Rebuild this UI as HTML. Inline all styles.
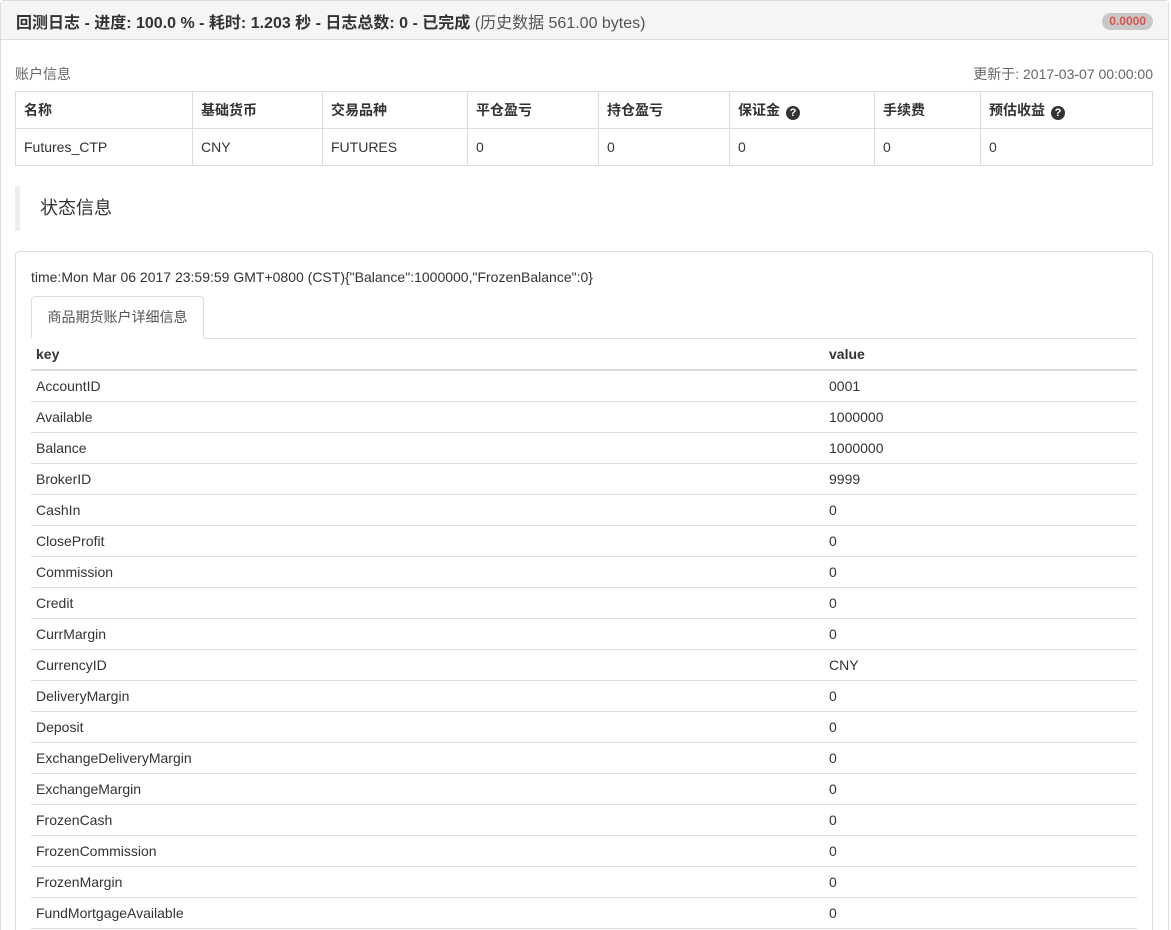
<!DOCTYPE html>
<html><head><meta charset="utf-8"><style>
*{box-sizing:border-box;margin:0;padding:0}
html,body{width:1171px;height:930px;overflow:hidden}
body{background:#fff;font-family:"Liberation Sans","Noto Sans CJK SC",sans-serif;font-size:14px;color:#333;position:relative}
.panel{position:absolute;left:0;top:0;width:1169px;height:960px;border:1px solid #ddd;border-radius:4px}
.ph{height:39px;background:#f5f5f5;border-bottom:1px solid #ddd;position:relative}
.ph .t{position:absolute;left:15px;top:8px;font-size:16px;font-weight:bold;color:#333}
.ph .t span{font-weight:normal;color:#555}
.badge{position:absolute;right:15px;top:12px;background:#c8c8c8;color:#d9534f;font-size:12px;font-weight:bold;border-radius:10px;padding:2px 7px;line-height:13px}
.abs{position:absolute}
table{border-collapse:collapse}
.acc{position:absolute;left:15px;top:91px;width:1138px}
.acc td,.acc th{border:1px solid #ddd;height:37px;padding:0 8px;text-align:left;vertical-align:middle}
.acc th{font-weight:bold}
.q{display:inline-block;width:14px;height:14px;border-radius:50%;background:#333;color:#fff;font-size:11px;line-height:14px;text-align:center;font-weight:bold;margin-left:6px;vertical-align:-1px}
.bq{position:absolute;left:15px;top:186px;height:45px;border-left:5px solid #eee;padding-left:20px;font-size:18px;line-height:45px}
.inner{position:absolute;left:15px;top:251px;width:1138px;height:720px;border:1px solid #ddd;border-radius:4px}
.tab{position:absolute;left:31px;top:296px;width:173px;height:43px;border:1px solid #ddd;border-bottom:1px solid #fff;border-radius:4px 4px 0 0;background:#fff;line-height:41px;text-align:center;color:#555}
.tline{position:absolute;left:31px;top:338px;width:1106px;border-top:1px solid #ddd}
.kv{position:absolute;left:31px;top:339px;width:1106px}
.kv td,.kv th{height:31px;padding:0 5px;text-align:left;border-bottom:1px solid #ddd;vertical-align:middle}
.kv th{border-bottom:2px solid #ddd;height:31px;font-weight:bold}
.kv td:first-child,.kv th:first-child{width:793px}
</style></head><body>
<div class="panel">
<div class="ph"><div class="t">回测日志 - 进度: 100.0 % - 耗时: 1.203 秒 - 日志总数: 0 - 已完成 <span>(历史数据 561.00 bytes)</span></div><div class="badge">0.0000</div></div>
</div>
<div class="abs" style="left:15px;top:64px;color:#666">账户信息</div>
<div class="abs" style="right:18px;top:64px;color:#666">更新于: 2017-03-07 00:00:00</div>
<table class="acc"><tr><th style="width:177px">名称</th><th style="width:130px">基础货币</th><th style="width:145px">交易品种</th><th style="width:131px">平仓盈亏</th><th style="width:131px">持仓盈亏</th><th style="width:145px">保证金<span class="q">?</span></th><th style="width:106px">手续费</th><th>预估收益<span class="q">?</span></th></tr>
<tr><td>Futures_CTP</td><td>CNY</td><td>FUTURES</td><td>0</td><td>0</td><td>0</td><td>0</td><td>0</td></tr></table>
<div class="bq">状态信息</div>
<div class="inner"></div>
<div class="abs" style="left:31px;top:269px">time:Mon Mar 06 2017 23:59:59 GMT+0800 (CST){"Balance":1000000,"FrozenBalance":0}</div>
<div class="tline"></div>
<div class="tab">商品期货账户详细信息</div>
<table class="kv">
<tr><th>key</th><th>value</th></tr>
<tr><td>AccountID</td><td>0001</td></tr>
<tr><td>Available</td><td>1000000</td></tr>
<tr><td>Balance</td><td>1000000</td></tr>
<tr><td>BrokerID</td><td>9999</td></tr>
<tr><td>CashIn</td><td>0</td></tr>
<tr><td>CloseProfit</td><td>0</td></tr>
<tr><td>Commission</td><td>0</td></tr>
<tr><td>Credit</td><td>0</td></tr>
<tr><td>CurrMargin</td><td>0</td></tr>
<tr><td>CurrencyID</td><td>CNY</td></tr>
<tr><td>DeliveryMargin</td><td>0</td></tr>
<tr><td>Deposit</td><td>0</td></tr>
<tr><td>ExchangeDeliveryMargin</td><td>0</td></tr>
<tr><td>ExchangeMargin</td><td>0</td></tr>
<tr><td>FrozenCash</td><td>0</td></tr>
<tr><td>FrozenCommission</td><td>0</td></tr>
<tr><td>FrozenMargin</td><td>0</td></tr>
<tr><td>FundMortgageAvailable</td><td>0</td></tr>
<tr><td>FundMortgageIn</td><td>0</td></tr>
</table>
</body></html>
